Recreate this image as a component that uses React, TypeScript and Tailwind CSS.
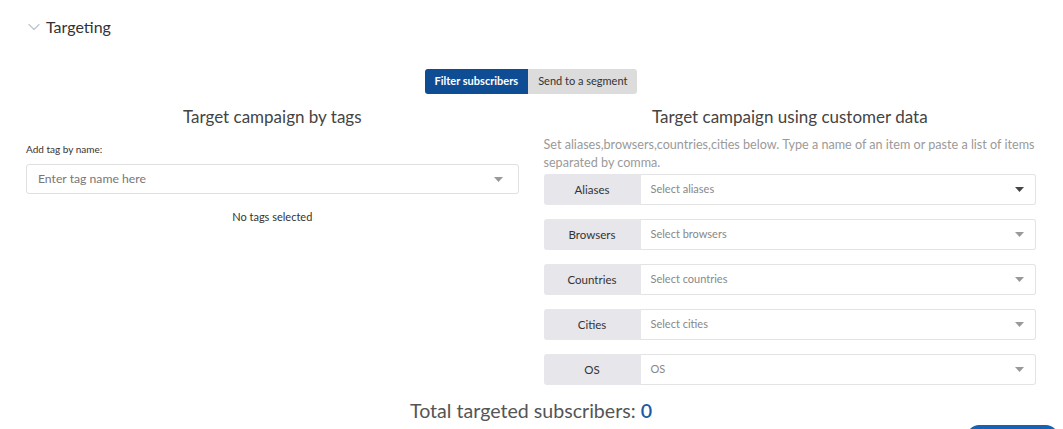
import { ChevronDown } from "lucide-react";

const FIELDS = [
	{ label: "Aliases", placeholder: "Select aliases" },
	{ label: "Browsers", placeholder: "Select browsers" },
	{ label: "Countries", placeholder: "Select countries" },
	{ label: "Cities", placeholder: "Select cities" },
	{ label: "OS", placeholder: "OS" },
];

function Caret({ dark }: { dark?: boolean }) {
	return (
		<svg width="9" height="5" viewBox="0 0 9 5" className="shrink-0">
			<path d="M0 0h9L4.5 5z" fill={dark ? "#444" : "#999"} />
		</svg>
	);
}

export default function App() {
	return (
		<div
			className="min-h-[429px] overflow-hidden bg-white pl-[26px] pr-[27px] pt-[17px] text-[#333]"
			style={{ fontFamily: "Lato, 'Open Sans', sans-serif" }}
		>
			<div className="-ml-[2px] flex h-[20px] items-center gap-[2px]">
				<ChevronDown size={20} strokeWidth={1.4} className="text-[#bcc5ce]" />
				<span className="text-[16px] leading-[20px] text-[#333]">Targeting</span>
			</div>

			<div className="mt-[32px] flex justify-center">
				<div className="flex h-[25px] overflow-hidden rounded-[3px] text-[11px]">
					<button className="bg-[#0e4d93] px-[10px] font-bold text-white">Filter subscribers</button>
					<button className="bg-[#dcdcdc] px-[10px] text-[#333]">Send to a segment</button>
				</div>
			</div>

			<div className="mt-[11px] grid grid-cols-2 gap-[25px]">
				<div className="flex flex-col">
					<h3 className="text-center text-[17px] leading-[24px] text-[#444]">Target campaign by tags</h3>
					<p className="mt-[13px] text-[10px] leading-[14px] text-[#333]">Add tag by name:</p>
					<div className="mt-[8px] flex h-[30px] items-center justify-between rounded-[3px] border border-[#e0e0e0] pl-[11px] pr-[15px]">
						<span className="text-[12.2px] text-[#777]">Enter tag name here</span>
						<Caret />
					</div>
					<p className="mt-[15px] text-center text-[11px] leading-[16px] text-[#333]">No tags selected</p>
				</div>

				<div className="flex flex-col">
					<h3 className="text-center text-[17px] leading-[24px] text-[#444]">
						Target campaign using customer data
					</h3>
					<p className="mt-[7px] text-[12.6px] leading-[18px] text-[#9a9a9a]">
						Set aliases,browsers,countries,cities below. Type a name of an item or paste a list of items
						separated by comma.
					</p>
					<div className="mt-[2px] flex flex-col gap-[14px]">
						{FIELDS.map((f, i) => (
							<div key={f.label} className="flex h-[31px]">
								<div className="flex w-[97px] shrink-0 items-center justify-center rounded-l-[3px] bg-[#e6e6eb] text-[11.5px] text-[#333]">
									{f.label}
								</div>
								<div className="flex flex-1 items-center justify-between rounded-r-[3px] border border-l-0 border-[#e3e3e3] pl-[10px] pr-[11px]">
									<span className="text-[11px] text-[#888]">{f.placeholder}</span>
									<Caret dark={i === 0} />
								</div>
							</div>
						))}
					</div>
				</div>
			</div>

			<p className="mt-[14px] text-center text-[19.6px] leading-[24px] text-[#555]">
				Total targeted subscribers: <span className="font-semibold text-[#1b5aa6]">0</span>
			</p>

			<div className="-mr-[22px] mt-[2px] flex justify-end">
				<div className="h-[12px] w-[91px] rounded-t-[14px] bg-[#1663b5]" />
			</div>
		</div>
	);
}
